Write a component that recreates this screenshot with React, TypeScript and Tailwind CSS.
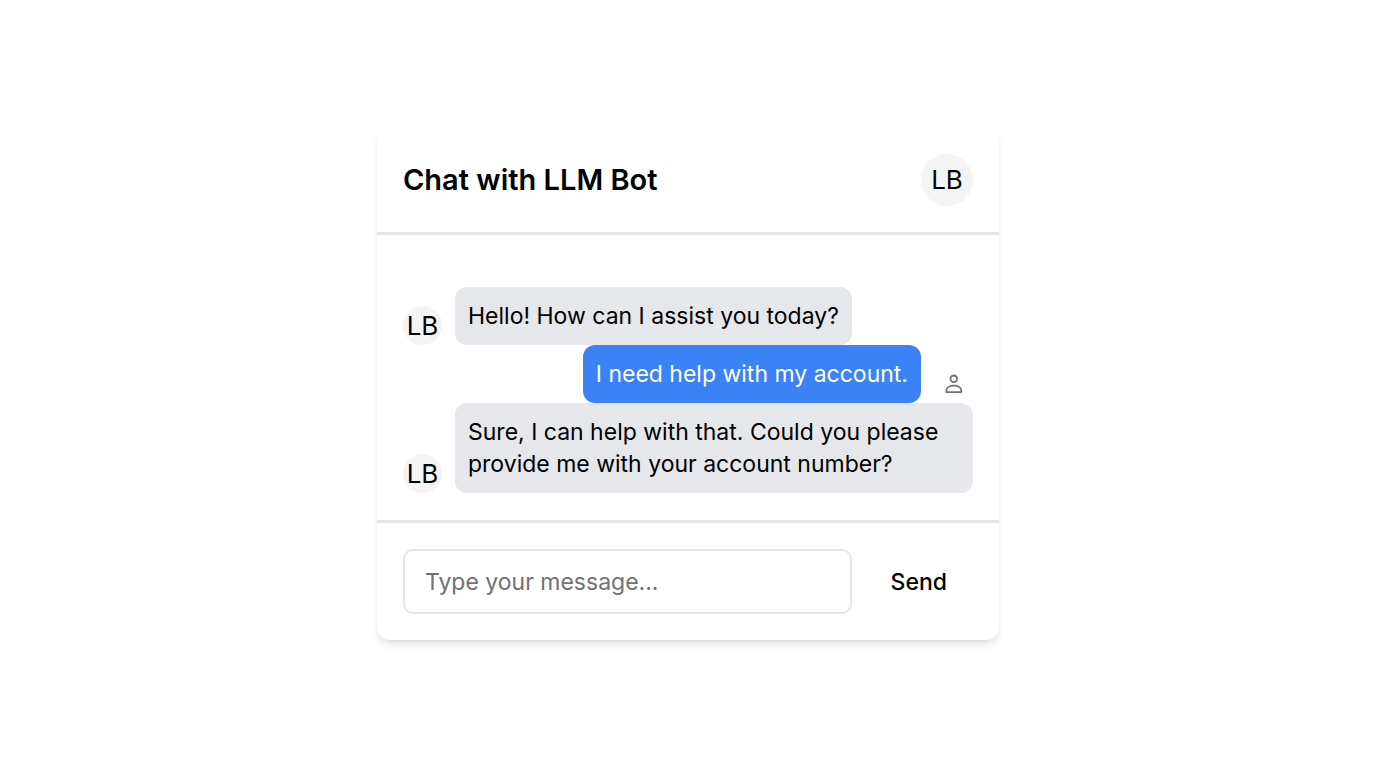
import React from "react";

type Message = { id: number; from: "bot" | "user"; text: string };

const messages: Message[] = [
  { id: 1, from: "bot", text: "Hello! How can I assist you today?" },
  { id: 2, from: "user", text: "I need help with my account." },
  { id: 3, from: "bot", text: "Sure, I can help with that. Could you please provide me with your account number?" },
];

function UserIcon() {
  return (
    <svg viewBox="0 0 20 20" className="size-5" fill="none" stroke="#717171" strokeWidth="1.8" strokeLinejoin="round" aria-hidden="true">
      <circle cx="9.8" cy="4.8" r="3.3" />
      <path d="M2.3 18.1v-1.4C2.3 13.4 5.6 11.6 9.8 11.6s7.5 1.8 7.5 5.1v1.4z" />
    </svg>
  );
}

function MessageRow({ message }: { message: Message }) {
  if (message.from === "user") {
    return (
      <li className="flex items-end justify-end gap-[13px]">
        <p className="rounded-xl bg-[#3b82f6] p-[13px] text-white">{message.text}</p>
        <span className="flex size-[39px] shrink-0 items-center justify-center">
          <UserIcon />
        </span>
      </li>
    );
  }
  return (
    <li className="flex items-end gap-[13px]">
      <span className="flex size-[39px] shrink-0 items-center justify-center rounded-full bg-[#f4f4f4] text-[26px]">LB</span>
      <p className="rounded-xl bg-[#e5e7eb] p-[13px]">{message.text}</p>
    </li>
  );
}

export default function App() {
  return (
    <div className="flex min-h-screen items-center justify-center bg-white font-['Inter',sans-serif] text-[23px] leading-[32px] text-black">
      <main className="w-full max-w-[622px] rounded-xl bg-white shadow-[0_6px_10px_-2px_rgba(0,0,0,0.1),0_3px_6px_-3px_rgba(0,0,0,0.1)]">
        <header className="flex items-center justify-between border-b-[3px] border-[#e5e5e7] p-[26px]">
          <h1 className="text-[29px] font-semibold">Chat with LLM Bot</h1>
          <span className="flex size-[52px] items-center justify-center rounded-full bg-[#f4f4f4] text-[26px]">LB</span>
        </header>
        <ul className="px-[26px] pt-[52px] pb-[27px]">
          {messages.map((message) => (
            <MessageRow key={message.id} message={message} />
          ))}
        </ul>
        <form className="flex items-center gap-[13px] border-t-[3px] border-[#e5e5e7] p-[26px]" onSubmit={(e) => e.preventDefault()}>
          <input
            type="text"
            aria-label="Message"
            placeholder="Type your message..."
            className="h-[65px] min-w-0 flex-1 rounded-[10px] border-2 border-[#e6e6e8] bg-white px-5 placeholder:text-[#717171]"
          />
          <button type="submit" className="h-[65px] rounded-[10px] px-[26px] font-medium">Send</button>
        </form>
      </main>
    </div>
  );
}
